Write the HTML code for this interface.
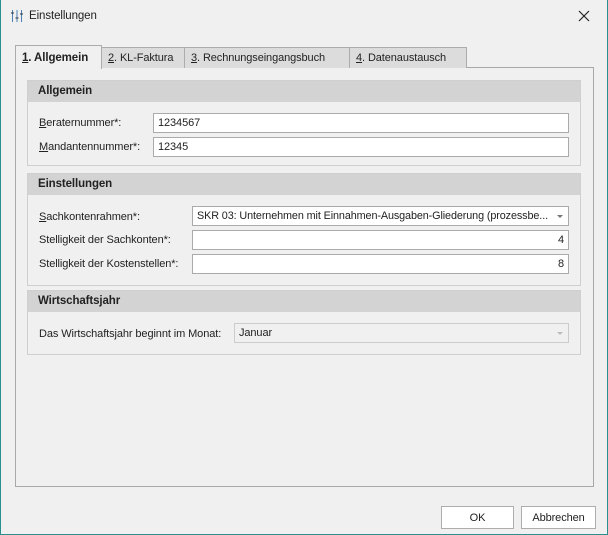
<!DOCTYPE html>
<html><head><meta charset="utf-8"><style>
*{box-sizing:border-box;margin:0;padding:0}
body{width:608px;height:535px;background:#f0f0f0;font-family:"Liberation Sans",sans-serif;font-size:11px;letter-spacing:-0.1px;color:#222;position:relative;overflow:hidden}
.win{position:absolute;left:0;top:0;width:608px;height:535px;border:1px solid #2a8f8f;border-top:none;background:#f0f0f0}
.a{position:absolute}
.tab{position:absolute;top:47px;height:21px;background:#dcdcdc;border:1px solid #acacac;border-bottom:none;padding:4px 0 0 6px;white-space:nowrap}
.panel{position:absolute;left:15px;top:67px;width:579px;height:420px;border:1px solid #a8a8a8;background:#f0f0f0}
.grp{position:absolute;left:27px;width:554px;border:1px solid #cfcfcf;background:#f0f0f0}
.gh{height:21px;background:#d3d3d3;font-weight:bold;font-size:11.5px;padding:4px 0 0 10px;color:#222}
.lbl{position:absolute;white-space:nowrap}
.inp{position:absolute;height:20px;background:#fff;border:1px solid #aaa;padding:3px 4px;white-space:nowrap;overflow:hidden}
.dd{position:absolute;right:5px;top:8px;width:0;height:0;border-left:3px solid transparent;border-right:3px solid transparent;border-top:3px solid #777}
.btn{position:absolute;top:506px;height:23px;background:#fff;border:1px solid #adadad;text-align:center;padding-top:5px}
u{text-decoration:underline}
</style></head><body><div class="win"></div>
<svg class="a" style="left:10px;top:9px" width="14" height="14" viewBox="0 0 14 14" stroke="#4a7fb5" stroke-width="1" fill="none"><path d="M2.5 1v12M7 1v12M11.5 1v12"/><path d="M1 4h3M5.5 9h3M10 5h3" stroke="#333"/></svg>
<div class="a" style="left:29px;top:10px;font-size:11.5px">Einstellungen</div>
<svg class="a" style="left:578px;top:10px" width="12" height="12" viewBox="0 0 12 12" stroke="#222" stroke-width="1.2"><path d="M1 1L11 11M11 1L1 11"/></svg>
<div class="panel"></div>
<div class="tab" style="left:15px;top:45px;width:87px;height:24px;background:#f0f0f0;font-weight:bold;font-size:11.5px;padding-top:6px;z-index:2"><u>1</u>. Allgemein</div>
<div class="tab" style="left:101px;width:84px"><u>2</u>. KL-Faktura</div>
<div class="tab" style="left:184px;width:166px"><u>3</u>. Rechnungseingangsbuch</div>
<div class="tab" style="left:349px;width:118px"><u>4</u>. Datenaustausch</div>

<div class="grp" style="top:80px;height:86px"><div class="gh">Allgemein</div></div>
<div class="lbl" style="left:39px;top:117px"><u>B</u>eraternummer*:</div>
<div class="inp" style="left:153px;top:113px;width:416px">1234567</div>
<div class="lbl" style="left:39px;top:141px"><u>M</u>andantennummer*:</div>
<div class="inp" style="left:153px;top:137px;width:416px">12345</div>

<div class="grp" style="top:173px;height:113px"><div class="gh">Einstellungen</div></div>
<div class="lbl" style="left:39px;top:211px"><u>S</u>achkontenrahmen*:</div>
<div class="inp" style="left:192px;top:206px;width:377px;font-size:10.8px">SKR 03: Unternehmen mit Einnahmen-Ausgaben-Gliederung (prozessbe...<span class="dd"></span></div>
<div class="lbl" style="left:39px;top:234px">Stelligkeit der Sachkonten*:</div>
<div class="inp" style="left:192px;top:230px;width:377px;text-align:right">4</div>
<div class="lbl" style="left:39px;top:258px">Stelligkeit der Kostenstellen*:</div>
<div class="inp" style="left:192px;top:254px;width:377px;text-align:right">8</div>

<div class="grp" style="top:290px;height:65px"><div class="gh">Wirtschaftsjahr</div></div>
<div class="lbl" style="left:39px;top:328px">Das Wirtschaftsjahr beginnt im Monat:</div>
<div class="inp" style="left:234px;top:323px;width:335px;background:#f0f0f0;border-color:#ccc">Januar<span class="dd" style="border-top-color:#bbb"></span></div>

<div class="btn" style="left:441px;width:73px">OK</div>
<div class="btn" style="left:521px;width:75px">Abbrechen</div>
</body></html>
